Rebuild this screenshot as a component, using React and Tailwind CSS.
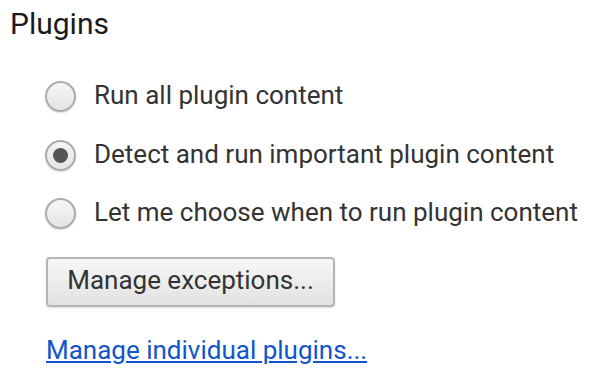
import React from "react";

function Radio({ checked }) {
  return (
    <span className="mt-[3px] flex h-[31px] w-[31px] shrink-0 items-center justify-center rounded-full border-2 border-[#ababab] bg-gradient-to-b from-[#f6f6f6] to-[#e4e4e4] shadow-[0_1px_2px_rgba(0,0,0,0.15)]">
      {checked && <span className="h-[15px] w-[15px] rounded-full bg-[#555]" />}
    </span>
  );
}

export default function App() {
  const items = [
    { label: "Run all plugin content", checked: false },
    { label: "Detect and run important plugin content", checked: true },
    { label: "Let me choose when to run plugin content", checked: false },
  ];
  return (
    <div className="h-[378px] w-[590px] overflow-hidden bg-white font-['Roboto',sans-serif]">
      <div className="pl-[10px] pt-[6px] text-[30px] leading-[36px] text-[#1a1a1a]">Plugins</div>
      <div className="flex flex-col gap-[24.7px] pl-[45px] pt-[36px]">
        {items.map((it) => (
          <div key={it.label} className="flex h-[34px] items-center gap-[18px] text-[26px] leading-[34px] text-[#333]">
            <Radio checked={it.checked} />
            <span>{it.label}</span>
          </div>
        ))}
      </div>
      <div className="pl-[46px] pt-[28px]">
        <button className="flex h-[50px] w-[289px] items-center justify-center rounded-[4px] border-2 border-[#b5b5b5] bg-gradient-to-b from-[#f7f7f7] to-[#e2e2e2] pb-[4px] text-[26px] text-[#333] shadow-[0_1px_2px_rgba(0,0,0,0.12)]">
          Manage exceptions...
        </button>
      </div>
      <div className="pl-[46px] pt-[28px]">
        <a href="#" className="text-[26px] leading-[30px] text-[#1155cc] underline">
          Manage individual plugins...
        </a>
      </div>
    </div>
  );
}
